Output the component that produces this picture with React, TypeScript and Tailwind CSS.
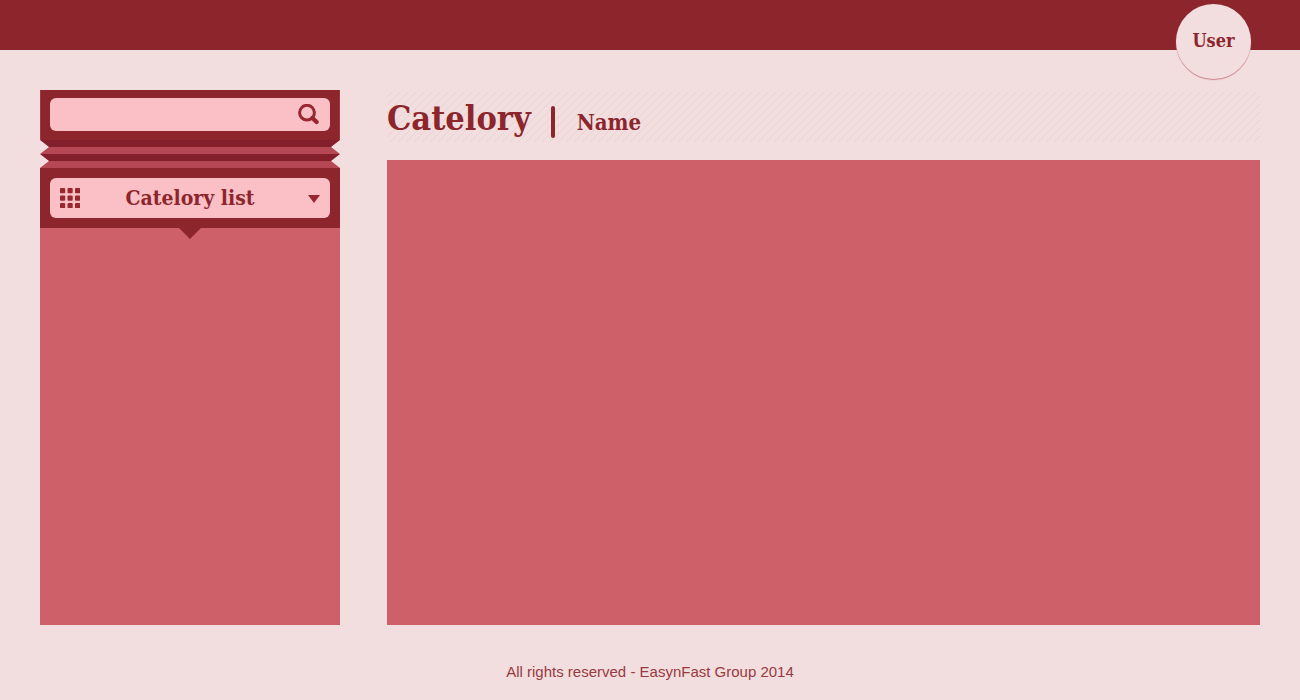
function SearchIcon() {
  return (
    <svg viewBox="0 0 22 22" className="size-[22px]" fill="none" stroke="#982731" aria-hidden="true">
      <circle cx="9" cy="8.7" r="7.4" strokeWidth="3" />
      <path d="M14.4 14 18.6 18" strokeWidth="4.4" strokeLinecap="round" />
    </svg>
  );
}

const cells = [0, 7.5, 15];

function GridIcon() {
  return (
    <svg viewBox="0 0 20 20" className="size-5" fill="#982731" aria-hidden="true">
      {cells.map((y) =>
        cells.map((x) => <rect key={`${x}-${y}`} x={x} y={y} width="5.2" height="5.2" rx="1" />),
      )}
    </svg>
  );
}

function CaretIcon() {
  return (
    <svg viewBox="0 0 12 10" className="h-2.5 w-3" fill="#982731" aria-hidden="true">
      <path d="M0 2h12L6 10z" />
    </svg>
  );
}

function Folds() {
  return (
    <div
      aria-hidden="true"
      className="[clip-path:polygon(0_0,100%_0,calc(100%-9px)_25%,100%_50%,calc(100%-9px)_75%,100%_100%,0_100%,9px_75%,0_50%,9px_25%)]"
    >
      <div className="h-[7px] bg-[#831f2a]" />
      <div className="h-[7px] bg-[#b64856]" />
      <div className="h-[7px] bg-[#831f2a]" />
      <div className="h-[7px] bg-[#b64856]" />
    </div>
  );
}

function Sidebar() {
  return (
    <aside className="flex w-[300px] shrink-0 flex-col">
      <form role="search" className="h-[50px] border-x border-[#9d3840] bg-[#8d252d] px-[9px] pt-2">
        <div className="flex h-[33px] items-center rounded-md bg-[#fac0c5] pr-2.5">
          <input
            type="search"
            aria-label="Search"
            className="h-full min-w-0 flex-1 bg-transparent px-3 font-['Liberation_Sans',sans-serif] text-[#8d252d] outline-none"
          />
          <button type="submit" aria-label="Search">
            <SearchIcon />
          </button>
        </div>
      </form>
      <Folds />
      <div className="relative bg-[#8d252d] p-2.5">
        <button
          type="button"
          className="grid h-10 w-full grid-cols-[20px_1fr_20px] items-center rounded-md bg-[#fac0c5] px-2.5"
        >
          <GridIcon />
          <span className="text-center text-[21px] leading-6">Catelory list</span>
          <span className="flex justify-end">
            <CaretIcon />
          </span>
        </button>
        <div
          aria-hidden="true"
          className="absolute top-full left-1/2 h-[11px] w-[22px] -translate-x-1/2 bg-[#8d252d] [clip-path:polygon(0_0,100%_0,50%_100%)]"
        />
      </div>
      <div className="flex-1 bg-[#cd6069]" />
    </aside>
  );
}

export default function App() {
  return (
    <div className="flex min-h-screen flex-col bg-[#f2dede] font-['DejaVu_Serif_Condensed','DejaVu_Serif',serif] font-bold text-[#8d252d]">
      <header className="relative h-[50px] bg-[#8d252d]">
        <a
          href="#user"
          className="absolute top-1 right-[49px] flex size-[75px] items-center justify-center rounded-full bg-[#f2dede] pb-0.5 text-lg shadow-[0_1px_1px_#c98088]"
        >
          User
        </a>
      </header>
      <div className="flex flex-1 gap-[47px] px-10 pt-10">
        <Sidebar />
        <main className="flex min-w-0 flex-1 flex-col pt-0.5">
          <div className="flex h-[50px] items-center bg-[linear-gradient(135deg,transparent_46%,#e8d3d4_46%,#e8d3d4_54%,transparent_54%)] bg-size-[8px_8px] bg-position-[5px_0] pt-0.5">
            <div className="flex items-baseline">
              <h1 className="text-[34px] leading-10">Catelory</h1>
              <span aria-hidden="true" className="mr-[22px] ml-5 h-8 w-1 self-end rounded-sm bg-[#8d252d]" />
              <h2 className="text-[22px] leading-8">Name</h2>
            </div>
          </div>
          <section aria-label="Content" className="mt-[18px] flex-1 bg-[#cd6069]" />
        </main>
      </div>
      <footer className="flex h-[75px] items-center justify-center pt-5 font-['Liberation_Sans',sans-serif] text-[15px] font-normal text-[#983a42]">
        <p>All rights reserved - EasynFast Group 2014</p>
      </footer>
    </div>
  );
}
